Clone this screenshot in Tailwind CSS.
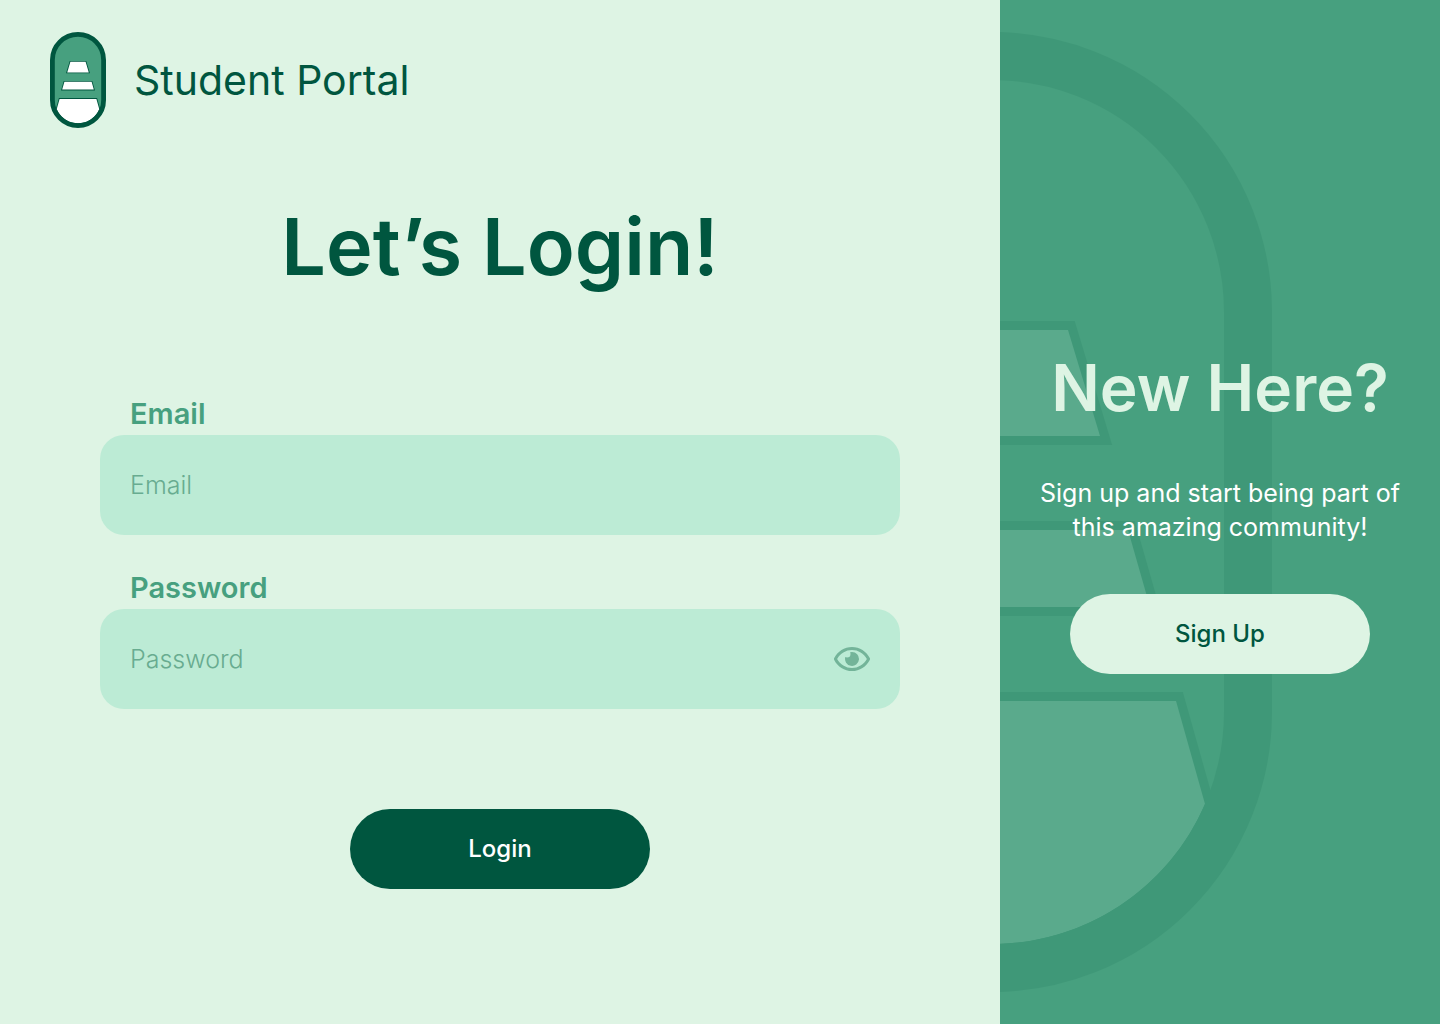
<!DOCTYPE html>
<html lang="en">
<head>
<meta charset="UTF-8" />
<meta name="viewport" content="width=device-width, initial-scale=1" />
<title>Student Portal</title>
<script src="https://cdn.jsdelivr.net/npm/@tailwindcss/browser@4"></script>
</head>
<body class="min-h-screen flex flex-col lg:flex-row bg-[#def4e4] font-['Inter',sans-serif] text-[#00563f]">
  <!-- Login -->
  <main class="flex-1 min-w-0 pb-8">
    <header class="flex items-center gap-7 pt-8 px-[50px]">
      <svg class="w-14 h-24 shrink-0" viewBox="0 0 560 960" aria-hidden="true">
        <rect x="24" y="24" width="512" height="912" rx="256" fill="#47a07f" />
        <g fill="#fff" stroke="#00563f" stroke-width="18" paint-order="stroke">
          <path d="M204 298H356L388 404H172Z" />
          <path d="M144 498H416L438 575H122Z" />
          <path d="M96 669H464L493 772A232 232 0 0 1 67 772Z" />
        </g>
        <rect x="24" y="24" width="512" height="912" rx="256" fill="none" stroke="#00563f" stroke-width="48" />
      </svg>
      <span class="text-[41px] leading-[60px]">Student Portal</span>
    </header>

    <h1 class="mt-[58px] text-center text-[79px] leading-[120px] font-semibold">Let’s Login!</h1>

    <form class="mt-[87px] px-8 xl:px-[100px] flex flex-col" onsubmit="return false">
      <label for="email" class="pl-[30px] text-[29px] leading-[42px] font-semibold text-[#47a07f]">Email</label>
      <input id="email" type="email" placeholder="Email" class="w-full h-[100px] px-[30px] rounded-3xl bg-[#bcebd5] text-[25px] outline-none placeholder:font-light placeholder:text-[#68ac90]" />

      <label for="password" class="mt-8 pl-[30px] text-[29px] leading-[42px] font-semibold text-[#47a07f]">Password</label>
      <div class="flex items-center h-[100px] px-[30px] rounded-3xl bg-[#bcebd5]">
        <input id="password" type="password" placeholder="Password" class="flex-1 min-w-0 h-full text-[25px] outline-none placeholder:font-light placeholder:text-[#68ac90]" />
        <button id="toggle" type="button" aria-label="Show password" class="text-[#73b499] cursor-pointer">
          <svg class="w-9 h-8" viewBox="0 0 576 512" fill="currentColor">
            <path d="M288 144a110.94 110.94 0 0 0-31.24 5 55.4 55.4 0 0 1 7.24 27 56 56 0 0 1-56 56 55.4 55.4 0 0 1-27-7.24A111.71 111.71 0 1 0 288 144zm284.52 97.4C518.29 135.59 410.93 64 288 64S57.68 135.64 3.48 241.41a32.35 32.35 0 0 0 0 29.19C57.71 376.41 165.07 448 288 448s230.32-71.64 284.52-177.41a32.35 32.35 0 0 0 0-29.19zM288 400c-98.65 0-189.09-55-237.93-144C98.91 167 189.34 112 288 112s189.09 55 237.93 144C477.1 345 386.66 400 288 400z" />
          </svg>
        </button>
      </div>

      <button type="submit" class="mt-[100px] self-center w-[300px] h-20 rounded-full bg-[#00563f] hover:bg-[#00452f] text-2xl font-medium text-white cursor-pointer">Login</button>
    </form>
  </main>

  <!-- Sign up -->
  <aside class="relative overflow-hidden lg:w-[440px] shrink-0 py-8 px-6 flex flex-col items-center justify-center text-center bg-[#47a07f]">
    <!-- logo watermark -->
    <svg class="absolute top-8 -left-72 w-[560px] h-[960px] opacity-10" viewBox="0 0 560 960" aria-hidden="true">
      <g fill="#fff" stroke="#00563f" stroke-width="18" paint-order="stroke">
        <path d="M204 298H356L388 404H172Z" />
        <path d="M144 498H416L438 575H122Z" />
        <path d="M96 669H464L493 772A232 232 0 0 1 67 772Z" />
      </g>
      <rect x="24" y="24" width="512" height="912" rx="256" fill="none" stroke="#00563f" stroke-width="48" />
    </svg>

    <h2 class="relative text-[64px] leading-[76px] font-semibold text-[#def4e4]">New Here?</h2>
    <p class="relative mt-[50px] text-[25px] leading-[34px] text-white">Sign up and start being part of<br />this amazing community!</p>
    <button type="button" class="relative mt-[50px] w-[300px] h-20 rounded-full bg-[#def4e4] hover:bg-white text-2xl font-medium cursor-pointer">Sign Up</button>
  </aside>

<script>
const password = document.getElementById("password");
const toggle = document.getElementById("toggle");

toggle.onclick = () => {
  const hidden = password.type === "password";
  password.type = hidden ? "text" : "password";
  toggle.setAttribute("aria-label", hidden ? "Hide password" : "Show password");
};
</script>
</body>
</html>
